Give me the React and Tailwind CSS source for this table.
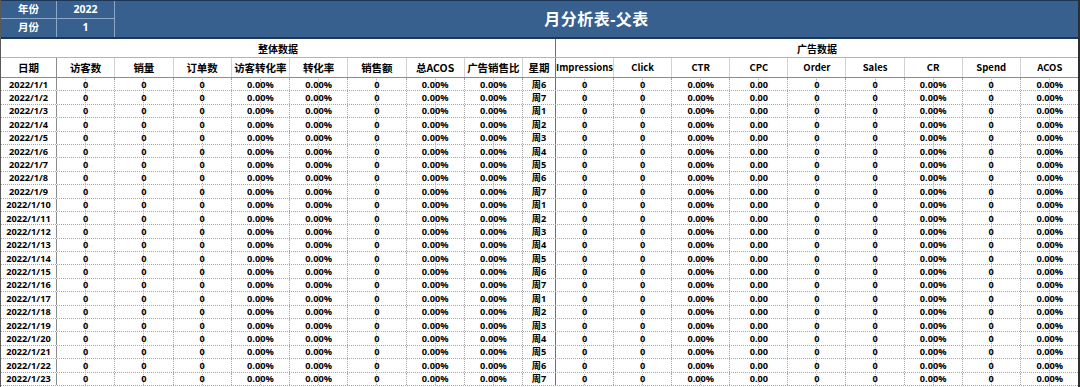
import React from 'react';

const COLS = [
    { key: 'visitors', label: '访客数', kind: 'int' },
    { key: 'units', label: '销量', kind: 'int' },
    { key: 'orders', label: '订单数', kind: 'int' },
    { key: 'visitCr', label: '访客转化率', kind: 'pct' },
    { key: 'cr', label: '转化率', kind: 'pct' },
    { key: 'sales', label: '销售额', kind: 'int' },
    { key: 'acos', label: '总ACOS', kind: 'pct' },
    { key: 'adRatio', label: '广告销售比', kind: 'pct' },
];

const AD_COLS = [
    { key: 'impr', label: 'Impressions', kind: 'int' },
    { key: 'click', label: 'Click', kind: 'int' },
    { key: 'ctr', label: 'CTR', kind: 'pct' },
    { key: 'cpc', label: 'CPC', kind: 'dec' },
    { key: 'order', label: 'Order', kind: 'int' },
    { key: 'adSales', label: 'Sales', kind: 'int' },
    { key: 'adCr', label: 'CR', kind: 'pct' },
    { key: 'spend', label: 'Spend', kind: 'int' },
    { key: 'adAcos', label: 'ACOS', kind: 'pct' },
];

const fmt = (kind, v) => {
    if (kind === 'pct') return `${(v * 100).toFixed(2)}%`;
    if (kind === 'dec') return v.toFixed(2);
    return String(v);
};

const ROWS = Array.from({ length: 23 }, (_, i) => ({
    date: `2022/1/${i + 1}`,
    week: `周${((i + 5) % 7) + 1}`,
}));

const GRID = 'grid grid-cols-[56px_repeat(8,58.25px)_33px_repeat(9,58.1px)]';

const midLine =
    'bg-[linear-gradient(to_bottom,#a6a6a6_50%,transparent_50%)] bg-[length:1px_2px] bg-repeat-y bg-center';

const HEAD_FONT = { fontFamily: '"Noto Sans CJK SC", "Open Sans", sans-serif' };

export default function App() {
    return (
        <div
            className="w-[1080px] h-[387px] overflow-hidden bg-white text-black border-l border-r-2 border-l-[#5a5a5a] border-r-[#2e2e2e]"
            style={{ fontFamily: '"Open Sans", "Noto Sans CJK SC", sans-serif' }}
        >
            {/* Blue title band */}
            <div className="flex h-[39px] bg-[#37608f] border-t border-b-2 border-t-[#1d3556] border-b-[#1d3556] text-white font-bold">
                <div className="grid grid-cols-[56px_58px] grid-rows-2 text-[10.5px]">
                    <div className="flex items-center justify-center border-r border-b border-[#8ea7c6]">年份</div>
                    <div className="flex items-center justify-center border-r border-b border-[#8ea7c6]">2022</div>
                    <div className="flex items-center justify-center border-r border-[#8ea7c6]">月份</div>
                    <div className="flex items-center justify-center border-r border-[#8ea7c6]">1</div>
                </div>
                <div className="flex-1 flex items-center justify-center text-[16px] tracking-[0.5px]">月分析表-父表</div>
            </div>

            {/* Group row */}
            <div className="grid grid-cols-[555px_1fr] h-[19px] border-b border-[#b4b4b4] text-[10px] font-bold" style={HEAD_FONT}>
                <div className="flex items-center justify-center border-r border-[#6e6e6e]">整体数据</div>
                <div className="flex items-center justify-center">广告数据</div>
            </div>

            {/* Column headers */}
            <div className={`${GRID} h-[20px] border-b border-[#8c8c8c] text-[10.5px] font-bold`} style={HEAD_FONT}>
                <div className="flex items-center justify-center border-r border-[#8c8c8c]">日期</div>
                {COLS.map(c => (
                    <div key={c.key} className="flex items-center justify-center border-r border-[#d2d2d2] whitespace-nowrap">
                        {c.label}
                    </div>
                ))}
                <div className="flex items-center justify-center border-r border-[#6e6e6e]">星期</div>
                {AD_COLS.map((c, i) => (
                    <div
                        key={c.key}
                        className={`flex items-center justify-center whitespace-nowrap text-[9.5px] ${i < AD_COLS.length - 1 ? 'border-r border-[#d2d2d2]' : ''}`}
                    >
                        {c.label}
                    </div>
                ))}
            </div>

            {/* Data rows */}
            {ROWS.map(r => (
                <div key={r.date} className={`${GRID} h-[13.4px] border-b border-dotted border-[#a6a6a6] text-[9.2px] font-bold leading-none`}>
                    <div className="flex items-center justify-center border-r border-[#8c8c8c]">{r.date}</div>
                    {COLS.map(c => (
                        <div key={c.key} className={`flex items-center justify-center border-r border-dotted border-[#a6a6a6] ${midLine}`}>
                            {fmt(c.kind, 0)}
                        </div>
                    ))}
                    <div className="flex items-center justify-center border-r border-[#6e6e6e]">{r.week}</div>
                    {AD_COLS.map((c, i) => (
                        <div
                            key={c.key}
                            className={`flex items-center justify-center ${midLine} ${i < AD_COLS.length - 1 ? 'border-r border-dotted border-[#a6a6a6]' : ''}`}
                        >
                            {fmt(c.kind, 0)}
                        </div>
                    ))}
                </div>
            ))}
        </div>
    );
}
